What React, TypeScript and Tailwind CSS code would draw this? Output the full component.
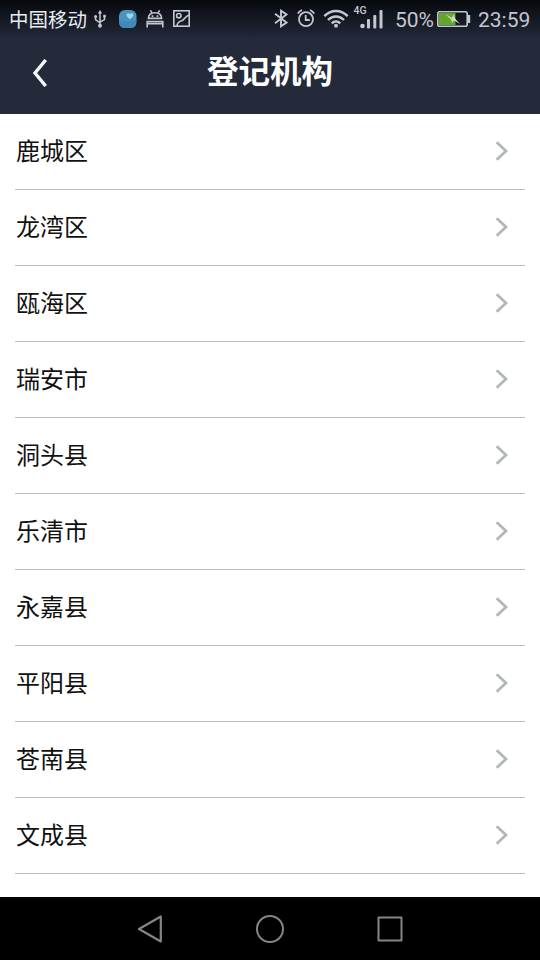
const REGIONS = [
  "鹿城区",
  "龙湾区",
  "瓯海区",
  "瑞安市",
  "洞头县",
  "乐清市",
  "永嘉县",
  "平阳县",
  "苍南县",
  "文成县",
];

const UsbIcon = () => (
  <svg width="12" height="18" viewBox="0 0 12 18" fill="none" stroke="#c3c7d0" strokeWidth="1.5">
    <path d="M6 3v12M1.5 7v2.6L6 12.8M10.5 6v3.6L6 12.2" />
    <path d="M6 0l2.200 3.500H3.800z" fill="#c3c7d0" stroke="none" />
    <circle cx="6" cy="15.8" r="2" fill="#c3c7d0" stroke="none" />
    <circle cx="1.6" cy="6.5" r="1.5" fill="#c3c7d0" stroke="none" />
    <path d="M9.2 4.8h2.600v2.600H9.200z" fill="#c3c7d0" stroke="none" />
  </svg>
);

const BlueAppIcon = () => (
  <svg width="18" height="18" viewBox="0 0 18 18">
    <rect width="17.5" height="18" rx="6" fill="#4a94c2" />
    <path d="M.2 10c5 2 11 2 17 0v2c0 4-2 6-6 6H6.200c-4 0-6-2-6-6z" fill="#4089b8" />
    <path d="M7.500 4.300c.8-1.300 2.200-1.300 3.200-.3C11.800 2.800 14.500 3 14.300 5c-.2 1.800-1.800 2.800-3.300 4.200C9.500 8 7 6.300 7.500 4.300z" fill="#9fd6e8" />
  </svg>
);

const AndroidIcon = () => (
  <svg width="18" height="18" viewBox="0 0 18 18" fill="none" stroke="#c3c7d0" strokeWidth="1.6">
    <path d="M2.4 8.400C2.600 4.700 5.300 2.800 9 2.800s6.400 1.900 6.600 5.600zM4.400.4l1.900 3M13.600.4l-1.900 3" />
    <path d="M1.200 17.600v-6h15.600v6M1.200 13.800h15.600" />
    <path d="M5.700 5.200h1.700v1.700H5.700zM10.600 5.200h1.700v1.700h-1.700z" fill="#c3c7d0" stroke="none" />
  </svg>
);

const PictureIcon = () => (
  <svg width="17" height="17" viewBox="0 0 17 17" fill="none" stroke="#c3c7d0" strokeWidth="1.6">
    <rect x=".8" y=".8" width="15.4" height="15.4" />
    <circle cx="5.8" cy="5.7" r="2.2" />
    <path d="M3.800 16c.7-3.500 2.700-4.700 5-5.200C11.500 10.200 11.500 6.500 16 5" />
  </svg>
);

const BluetoothIcon = () => (
  <svg width="14" height="19" viewBox="0 0 14 19" fill="none" stroke="#c3c7d0" strokeWidth="1.9">
    <path d="M1 4.800l11.500 8.800L7 17.300V1.700l5.500 3.700L1 14.200" />
  </svg>
);

const AlarmIcon = () => (
  <svg width="18" height="19" viewBox="0 0 18 19" fill="none" stroke="#c3c7d0" strokeWidth="1.8">
    <circle cx="9" cy="10.2" r="7" />
    <path d="M8.700 6v5h4M.8 4.600Q2 2.300 5 1M17.200 4.600Q16 2.300 13 1" />
  </svg>
);

const WifiIcon = () => (
  <svg width="26" height="19" viewBox="0 0 26 19" fill="none" stroke="#c3c7d0" strokeWidth="2.5">
    <path d="M1.300 7.200c6.700-7 16.700-7 23.400 0M5 11c4.700-4.800 11.300-4.800 16 0M8.700 14.300c2.600-2.500 6-2.500 8.600 0" />
    <circle cx="13" cy="16.7" r="2" fill="#c3c7d0" stroke="none" />
  </svg>
);

const SignalIcon = () => (
  <svg width="30" height="27" viewBox="0 -4 30 27" fill="#c3c7d0">
    <text x="0.5" y="8" fontSize="10.5" fontFamily="Roboto, sans-serif" fontWeight="500">
      4G
    </text>
    <circle cx="9.5" cy="20" r="2.3" />
    <rect x="14" y="13" width="3" height="9.5" rx="1" />
    <rect x="20.3" y="9" width="3" height="13.5" rx="1" />
    <rect x="26.5" y="4" width="3" height="18.5" rx="1" />
  </svg>
);

const BatteryIcon = () => (
  <svg width="34" height="16" viewBox="0 0 34 16">
    <rect x="2" y="2" width="16.5" height="12" fill="#62a72b" />
    <rect x=".8" y=".8" width="29.4" height="14.4" rx="1.8" fill="none" stroke="#c3c7d0" strokeWidth="1.6" />
    <path d="M31 4h2.200v8H31z" fill="#c3c7d0" />
    <path d="M8 3l7 3.800L16.800 3l1.200 4.500L23 13l-6-3.400L15 12l-.8-3.400z" fill="#cbdcbd" />
  </svg>
);

const StatusBar = () => (
  <div className="flex h-[38px] shrink-0 items-center bg-linear-to-b from-[#07090c] via-[#151923] to-[#222839] pr-[10px] pl-[9px] text-[#c3c7d0]">
    <span className="w-[78px] font-['Noto_Sans_CJK_SC',sans-serif] text-[19.5px] leading-[38px] whitespace-nowrap text-[#e8ebf0]">
      中国移动
    </span>
    <div className="mb-px ml-[7px] flex items-center">
      <UsbIcon />
      <div className="ml-[13px]">
        <BlueAppIcon />
      </div>
      <div className="ml-[9px]">
        <AndroidIcon />
      </div>
      <div className="ml-[9px]">
        <PictureIcon />
      </div>
    </div>
    <div className="mb-px ml-auto flex items-center font-[Roboto,sans-serif] text-[21px] leading-[38px]">
      <BluetoothIcon />
      <div className="ml-[9px]">
        <AlarmIcon />
      </div>
      <div className="ml-[8px]">
        <WifiIcon />
      </div>
      <div className="mb-[6px] ml-[4px]">
        <SignalIcon />
      </div>
      <span className="mt-[2px] ml-[12px] w-[40px] whitespace-nowrap">50%</span>
      <div className="ml-[2px]">
        <BatteryIcon />
      </div>
      <span className="mt-[2px] ml-[7px] w-[52px] whitespace-nowrap">23:59</span>
    </div>
  </div>
);

const Header = () => (
  <header className="grid h-[76px] shrink-0 grid-cols-[80px_1fr_80px] items-center bg-[#242a3a] text-white">
    <button aria-label="返回" className="flex h-full items-center pb-[7px] pl-[32px]">
      <svg width="16" height="28" viewBox="0 0 16 28" fill="none" stroke="#f3f6fa" strokeWidth="3.4">
        <path d="M13.700 1L3 14l10.700 13" />
      </svg>
    </button>
    <h1 className="pb-[12px] text-center text-[31.5px] leading-none font-bold">登记机构</h1>
  </header>
);

const App = () => {
  return (
    <div className="flex h-screen w-full flex-col overflow-hidden bg-white font-['Noto_Sans_CJK_SC',sans-serif]">
      <StatusBar />
      <Header />
      <ul className="flex-1 px-[15px]">
        {REGIONS.map((name) => (
          <li
            key={name}
            className="flex h-[76px] items-center justify-between border-b border-[#bfbfbf] pr-[16px] pl-px"
          >
            <span className="pb-[3px] text-2xl leading-none text-[#111]">{name}</span>
            <svg width="14" height="20" viewBox="0 0 14 20" fill="none" stroke="#b1b8b7" strokeWidth="2.8" className="mb-px">
              <path d="M1.700 1.200L11 10l-9.300 8.800" />
            </svg>
          </li>
        ))}
      </ul>
      <nav className="grid h-[63px] shrink-0 grid-cols-[1fr_120px_120px_120px_1fr] items-center justify-items-center bg-black">
        <svg width="26" height="28" viewBox="0 0 26 28" fill="none" stroke="#858585" strokeWidth="2.2" strokeLinejoin="round" className="col-start-2">
          <path d="M23.800 1.500v25L2 14z" />
        </svg>
        <svg width="28" height="28" viewBox="0 0 28 28" fill="none" stroke="#858585" strokeWidth="2">
          <circle cx="14" cy="14" r="13" />
        </svg>
        <svg width="26" height="26" viewBox="0 0 26 26" fill="none" stroke="#858585" strokeWidth="2" strokeLinejoin="round">
          <rect x="1.5" y="1.5" width="23" height="23" />
        </svg>
      </nav>
    </div>
  );
};

export default App;
